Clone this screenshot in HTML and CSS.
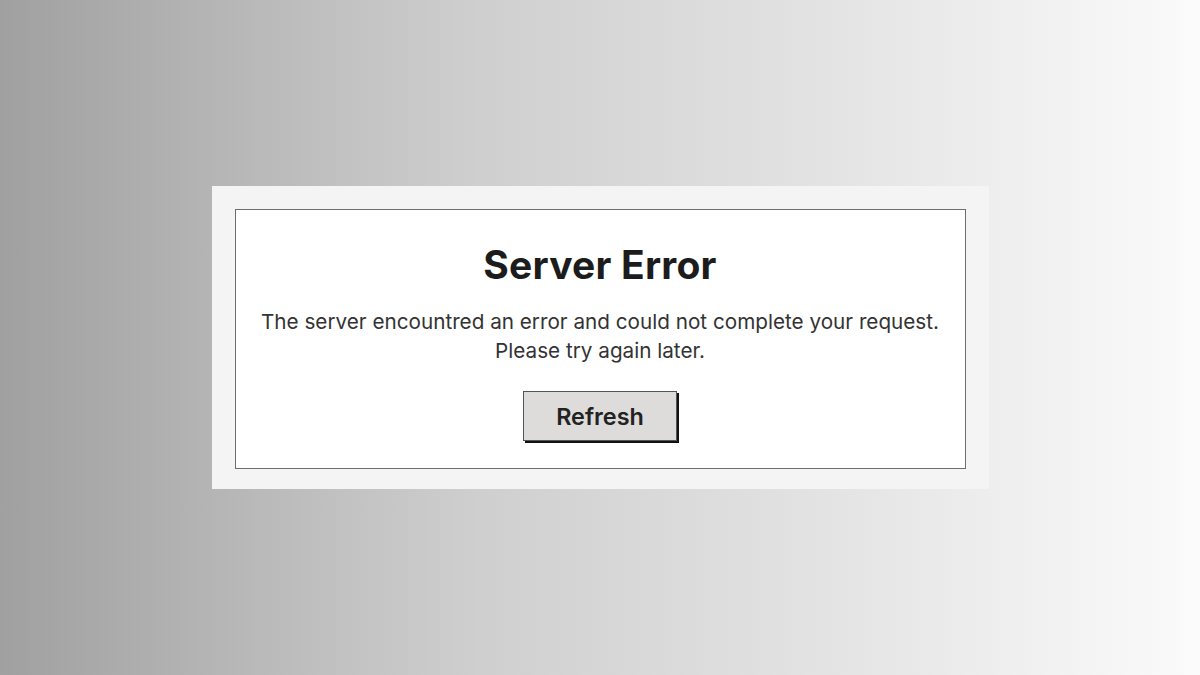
FILE: index.html
```html
<!DOCTYPE html>
<html lang="en">
<head>
    <meta charset="UTF-8">
    <meta name="viewport" content="width=device-width, initial-scale=1.0">
    <title>Server Error</title>
    <link rel="stylesheet" href="styles.css">
</head>
<body>
    <div class="errorWrap">
        <div class="errorCard">
            <div class="errorBox">
                <h1 class="errorTitle">Server Error</h1>
                <p class="errorText">The server encountred an error and could not complete your request.<br>Please try again later.</p>
                <button class="refreshBtn" type="button">Refresh</button>
            </div>
        </div>
    </div>
</body>
</html>
```

FILE: styles.css
```css
*{
    padding: 0;
    margin: 0;
    box-sizing: border-box;
}
html,body{
    height: 100%;
}
body{
    font-family: Inter, "Noto Sans", "Liberation Sans", sans-serif;
    background: linear-gradient(to right, #a0a0a0 0%, #cfcfcf 40%, #e4e4e4 70%, #fbfbfb 100%);
}
.errorWrap{
    display: flex;
    align-items: center;
    justify-content: center;
    height: 100%;
}
.errorCard{
    width: 777px;
    height: 303px;
    padding: 23px 23px 20px 23px;
    background-color: #f4f4f4;
}
.errorBox{
    display: flex;
    flex-direction: column;
    align-items: center;
    height: 100%;
    padding-top: 32px;
    border: 1px solid #6e6e6e;
    background-color: #fff;
}
.errorTitle{
    font-size: 39px;
    line-height: 46px;
    font-weight: 700;
    color: #1c1c1c;
    letter-spacing: 0.2px;
}
.errorText{
    margin-top: 19px;
    font-size: 20.7px;
    line-height: 29px;
    text-align: center;
    color: #333;
}
.refreshBtn{
    margin-top: 26px;
    width: 154px;
    height: 50px;
    font-family: inherit;
    font-size: 23.4px;
    font-weight: 600;
    color: #222;
    background-color: #dddcda;
    border: 1px solid #555;
    box-shadow: 2px 2px 0 #111;
    cursor: pointer;
}
```
